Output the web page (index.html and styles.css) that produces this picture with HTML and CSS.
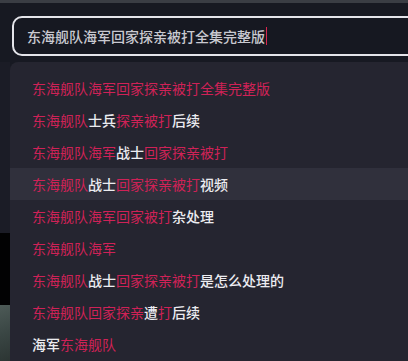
FILE: index.html
```html
<!DOCTYPE html>
<html lang="zh-CN">
<head>
    <meta charset="UTF-8">
    <meta name="viewport" content="width=device-width, initial-scale=1.0">
    <title>搜索</title>
    <link rel="stylesheet" href="styles.css">
</head>
<body>
    <div class="top-strip"></div>

    <div class="search-area">
        <div class="search-box">
            <span class="query">东海舰队海军回家探亲被打全集完整版</span><span class="caret"></span>
        </div>
    </div>

    <div class="results">
        <div class="backdrop">
            <div class="bd-navy"></div>
            <div class="bd-black"></div>
            <div class="bd-photo"></div>
        </div>

        <ul class="suggest">
            <li class="item"><em>东海舰队海军回家探亲被打全集完整版</em></li>
            <li class="item"><em>东海舰队</em>士兵<em>探亲被打</em>后续</li>
            <li class="item"><em>东海舰队海军</em>战士<em>回家探亲被打</em></li>
            <li class="item active"><em>东海舰队</em>战士<em>回家探亲被打</em>视频</li>
            <li class="item"><em>东海舰队海军回家被打</em>杂处理</li>
            <li class="item"><em>东海舰队海军</em></li>
            <li class="item"><em>东海舰队</em>战士<em>回家探亲被打</em>是怎么处理的</li>
            <li class="item"><em>东海舰队回家探亲</em>遭<em>打</em>后续</li>
            <li class="item">海军<em>东海舰队</em></li>
        </ul>
    </div>
</body>
</html>
```

FILE: styles.css
```css
* {
    box-sizing: border-box;
    margin: 0;
    padding: 0;
}

html, body {
    height: 100%;
    overflow: hidden;
}

body {
    font-family: "Noto Sans CJK SC", "Noto Sans", sans-serif;
    font-size: 14px;
    background-color: #171922;
    color: #ececf0;
    display: flex;
    flex-direction: column;
}

.top-strip {
    height: 3px;
    background-color: #3a3d44;
}

.search-area {
    padding: 13px 0 0 12px;
}

.search-box {
    width: calc(100% + 20px);
    height: 40px;
    border: 2px solid #e4e4ea;
    border-radius: 10px;
    padding-left: 13px;
    display: flex;
    align-items: center;
    background-color: #161821;
}

.query {
    color: #c9c9d0;
    font-weight: 500;
}

.caret {
    width: 1px;
    height: 18px;
    background-color: #d8264f;
    margin-left: 1px;
}

.results {
    flex: 1;
    display: flex;
    margin-top: 6px;
}

.backdrop {
    width: 10px;
    display: flex;
    flex-direction: column;
}

.bd-navy {
    height: 171px;
    background-color: #1b1c26;
}

.bd-black {
    height: 72px;
    background-color: #020203;
}

.bd-photo {
    flex: 1;
    background: linear-gradient(160deg, #4d5a57 0%, #3a4644 50%, #2c3533 100%);
}

.suggest {
    flex: 1;
    list-style: none;
    background-color: #252530;
    border-radius: 8px 0 0 0;
    padding-top: 10px;
}

.item {
    height: 32px;
    line-height: 32px;
    padding-left: 22px;
    font-weight: 500;
    color: #ececf0;
    white-space: nowrap;
}

.item em {
    font-style: normal;
    font-weight: 400;
    color: #cf2257;
}

.item.active {
    background-color: #30303c;
}
```
